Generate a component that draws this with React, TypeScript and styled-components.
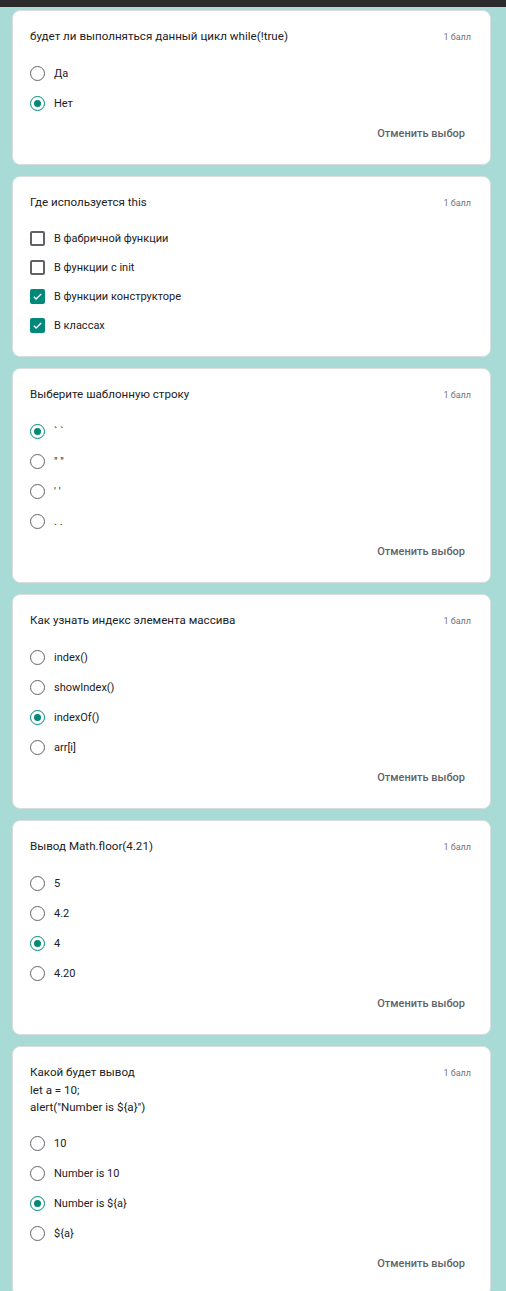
import React from "react";
import styled, { createGlobalStyle } from "styled-components";

const GlobalStyle = createGlobalStyle`
  body {
    margin: 0;
    background: #a8dbd5;
    font-family: Roboto, "Noto Sans", Arial, sans-serif;
  }
`;

const TopBar = styled.div`
  height: 7px;
  background: #2b2b2b;
`;

const List = styled.div`
  display: flex;
  flex-direction: column;
  gap: 11px;
  width: 479px;
  margin-left: 12px;
  padding: 3px 0 40px;
`;

const Card = styled.div`
  background: #fff;
  border: 1px solid #dadce0;
  border-radius: 8px;
  padding: 17px 19px 16px 17px;
`;

const Head = styled.div`
  display: flex;
  justify-content: space-between;
  align-items: flex-start;
  margin-bottom: 12px;
`;

const Title = styled.div`
  font-size: 11.6px;
  line-height: 17.6px;
  color: #202124;
  white-space: pre-line;
`;

const Points = styled.div`
  font-size: 9px;
  line-height: 18px;
  color: #70757a;
  flex-shrink: 0;
`;

const Option = styled.div<{ $h: number }>`
  display: flex;
  align-items: center;
  gap: 9px;
  height: ${(p) => p.$h}px;
  font-size: 11px;
  color: #202124;
`;

const Radio = styled.span<{ $on?: boolean }>`
  box-sizing: border-box;
  width: 15px;
  height: 15px;
  border-radius: 50%;
  border: 1.5px solid ${(p) => (p.$on ? "#00897b" : "#5f6368")};
  display: flex;
  align-items: center;
  justify-content: center;
  flex-shrink: 0;
  &::after {
    content: "";
    width: 7px;
    height: 7px;
    border-radius: 50%;
    background: ${(p) => (p.$on ? "#00897b" : "transparent")};
  }
`;

const Box = styled.span<{ $on?: boolean }>`
  box-sizing: border-box;
  width: 15px;
  height: 15px;
  border-radius: 2px;
  border: 2px solid ${(p) => (p.$on ? "#00897b" : "#5f6368")};
  background: ${(p) => (p.$on ? "#00897b" : "#fff")};
  display: flex;
  align-items: center;
  justify-content: center;
  flex-shrink: 0;
`;

const Footer = styled.div`
  display: flex;
  justify-content: flex-end;
  align-items: center;
  height: 30px;
`;

const Clear = styled.span`
  font-size: 11px;
  font-weight: 500;
  color: #5f6368;
  padding-right: 6px;
`;

type Q = {
  title: string;
  kind: "radio" | "check";
  options: string[];
  checked: number[];
};

const questions: Q[] = [
  { title: "будет ли выполняться данный цикл while(!true)", kind: "radio", options: ["Да", "Нет"], checked: [1] },
  {
    title: "Где используется this",
    kind: "check",
    options: ["В фабричной функции", "В функции с init", "В функции конструкторе", "В классах"],
    checked: [2, 3],
  },
  { title: "Выберите шаблонную строку", kind: "radio", options: ["` `", '" "', "' '", ". ."], checked: [0] },
  {
    title: "Как узнать индекс элемента массива",
    kind: "radio",
    options: ["index()", "showIndex()", "indexOf()", "arr[i]"],
    checked: [2],
  },
  { title: "Вывод Math.floor(4.21)", kind: "radio", options: ["5", "4.2", "4", "4.20"], checked: [2] },
  {
    title: 'Какой будет вывод\nlet a = 10;\nalert("Number is ${a}")',
    kind: "radio",
    options: ["10", "Number is 10", "Number is ${a}", "${a}"],
    checked: [2],
  },
];

function Check() {
  return (
    <svg width="11" height="11" viewBox="0 0 24 24">
      <path d="M4 12.5l5 5L20 6.5" fill="none" stroke="#fff" strokeWidth="3" />
    </svg>
  );
}

export default function App() {
  return (
    <>
      <GlobalStyle />
      <TopBar />
      <List>
        {questions.map((q, i) => (
          <Card key={i}>
            <Head>
              <Title>{q.title}</Title>
              <Points>1 балл</Points>
            </Head>
            {q.options.map((o, j) => {
              const on = q.checked.includes(j);
              return (
                <Option key={j} $h={q.kind === "radio" ? 30 : 29}>
                  {q.kind === "radio" ? <Radio $on={on} /> : <Box $on={on}>{on && <Check />}</Box>}
                  <span>{o}</span>
                </Option>
              );
            })}
            {q.kind === "radio" && (
              <Footer>
                <Clear>Отменить выбор</Clear>
              </Footer>
            )}
          </Card>
        ))}
      </List>
    </>
  );
}
